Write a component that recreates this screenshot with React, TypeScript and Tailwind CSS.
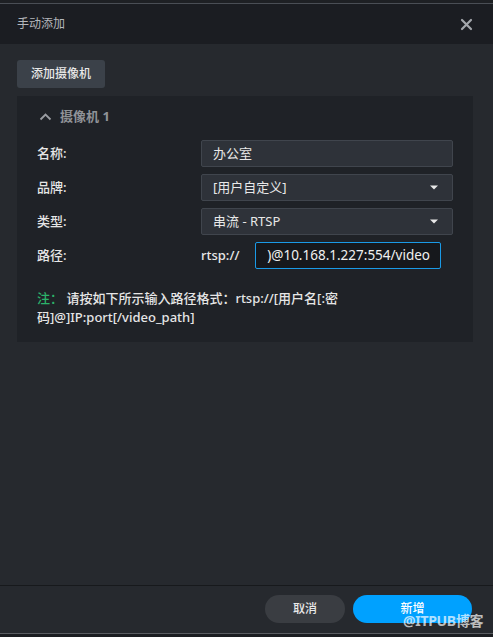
import React from 'react'

const font = { fontFamily: '"Noto Sans", "Noto Sans CJK SC", sans-serif' }

function Caret() {
  return (
    <svg width="8" height="5" viewBox="0 0 8 5" className="shrink-0">
      <path d="M0 0.5h8L4 4.5z" fill="#e8e8e8" />
    </svg>
  )
}

function Row({ label, children }: { label: string; children: React.ReactNode }) {
  return (
    <div className="flex items-center h-[27px]">
      <div className="w-[164px] text-[13px] text-[#e6e6e6] font-medium">{label}</div>
      {children}
    </div>
  )
}

export default function App() {
  return (
    <div className="w-[493px] h-[637px] flex flex-col bg-[#26292e] overflow-hidden relative" style={font}>
      <div className="h-[3px] bg-[#1e2024]" />
      <div className="h-px bg-[#4a4e55]" />

      {/* header */}
      <div className="h-[40px] bg-[#1b1d22] flex items-center justify-between pl-[17px] pr-[20px]">
        <span className="text-[12px] text-[#b4b7bc]">手动添加</span>
        <svg width="13" height="13" viewBox="0 0 13 13">
          <path d="M2 2l9 9M11 2l-9 9" stroke="#a3a6ab" strokeWidth="2.2" strokeLinecap="round" />
        </svg>
      </div>

      {/* body */}
      <div className="flex-1 px-[17px] pt-[16px]">
        <button className="h-[28px] w-[88px] rounded-[3px] bg-[#3b4149] text-[12px] text-[#e8e8e8] font-medium">
          添加摄像机
        </button>

        <div className="mt-[8px] w-[456px] h-[246px] bg-[#1f2227] pl-[20px] pt-[12px]">
          <div className="flex items-center h-[18px] gap-[8px] pl-[2px]">
            <svg width="13" height="8" viewBox="0 0 13 8">
              <path d="M1.5 6.5L6.5 1.5l5 5" stroke="#9a9da2" strokeWidth="1.8" fill="none" />
            </svg>
            <span className="text-[13px] font-bold text-[#8f9297]">摄像机 1</span>
          </div>

          <div className="mt-[14px] flex flex-col gap-[7px]">
            <Row label="名称:">
              <div className="w-[252px] h-full rounded-[2px] border border-[#40454d] bg-[#2e3239] flex items-center px-[11px] text-[13px] text-[#e8e8e8]">
                办公室
              </div>
            </Row>
            <Row label="品牌:">
              <div className="w-[252px] h-full rounded-[2px] border border-[#40454d] bg-[#2e3239] flex items-center justify-between pl-[11px] pr-[14px] text-[13px] text-[#e8e8e8]">
                <span>[用户自定义]</span>
                <Caret />
              </div>
            </Row>
            <Row label="类型:">
              <div className="w-[252px] h-full rounded-[2px] border border-[#40454d] bg-[#2e3239] flex items-center justify-between pl-[11px] pr-[14px] text-[13px] text-[#e8e8e8]">
                <span>串流 - RTSP</span>
                <Caret />
              </div>
            </Row>
            <Row label="路径:">
              <span className="w-[54px] text-[13px] text-[#e8e8e8] font-medium">rtsp://</span>
              <div className="w-[186px] h-full rounded-[2px] border border-[#1a9ae6] bg-[#16181c] flex items-center justify-end overflow-hidden pr-[10px] text-[13.5px] text-[#f0f0f0] whitespace-nowrap">
                <span className="shrink-0">)@10.168.1.227:554/video</span>
              </div>
            </Row>
          </div>

          <div className="mt-[20px] text-[13px] leading-[19px] text-[#e6e6e6] font-medium pr-[20px]">
            <span className="text-[#2cb36a]">注：</span> 请按如下所示输入路径格式：rtsp://[用户名[:密
            <br />
            码]@]IP:port[/video_path]
          </div>
        </div>
      </div>

      {/* footer */}
      <div className="h-px bg-[#17191c]" />
      <div className="h-[47px] flex justify-end items-start pt-[9px] pr-[21px] gap-[8px]">
        <button className="w-[80px] h-[28px] rounded-full bg-[#3a3d42] text-[12px] text-[#e8e8e8] font-medium">
          取消
        </button>
        <button className="w-[119px] h-[28px] rounded-full bg-[#00a1ff] text-[12px] text-white font-medium">
          新增
        </button>
      </div>
      <div className="h-px bg-[#5a5d62]" />
      <div className="h-[3px] bg-[#1b1d21]" />

      <span className="absolute left-[403px] top-[610px] text-[14px] font-bold text-white/70 tracking-[-0.3px]">
        @ITPUB博客
      </span>
    </div>
  )
}
